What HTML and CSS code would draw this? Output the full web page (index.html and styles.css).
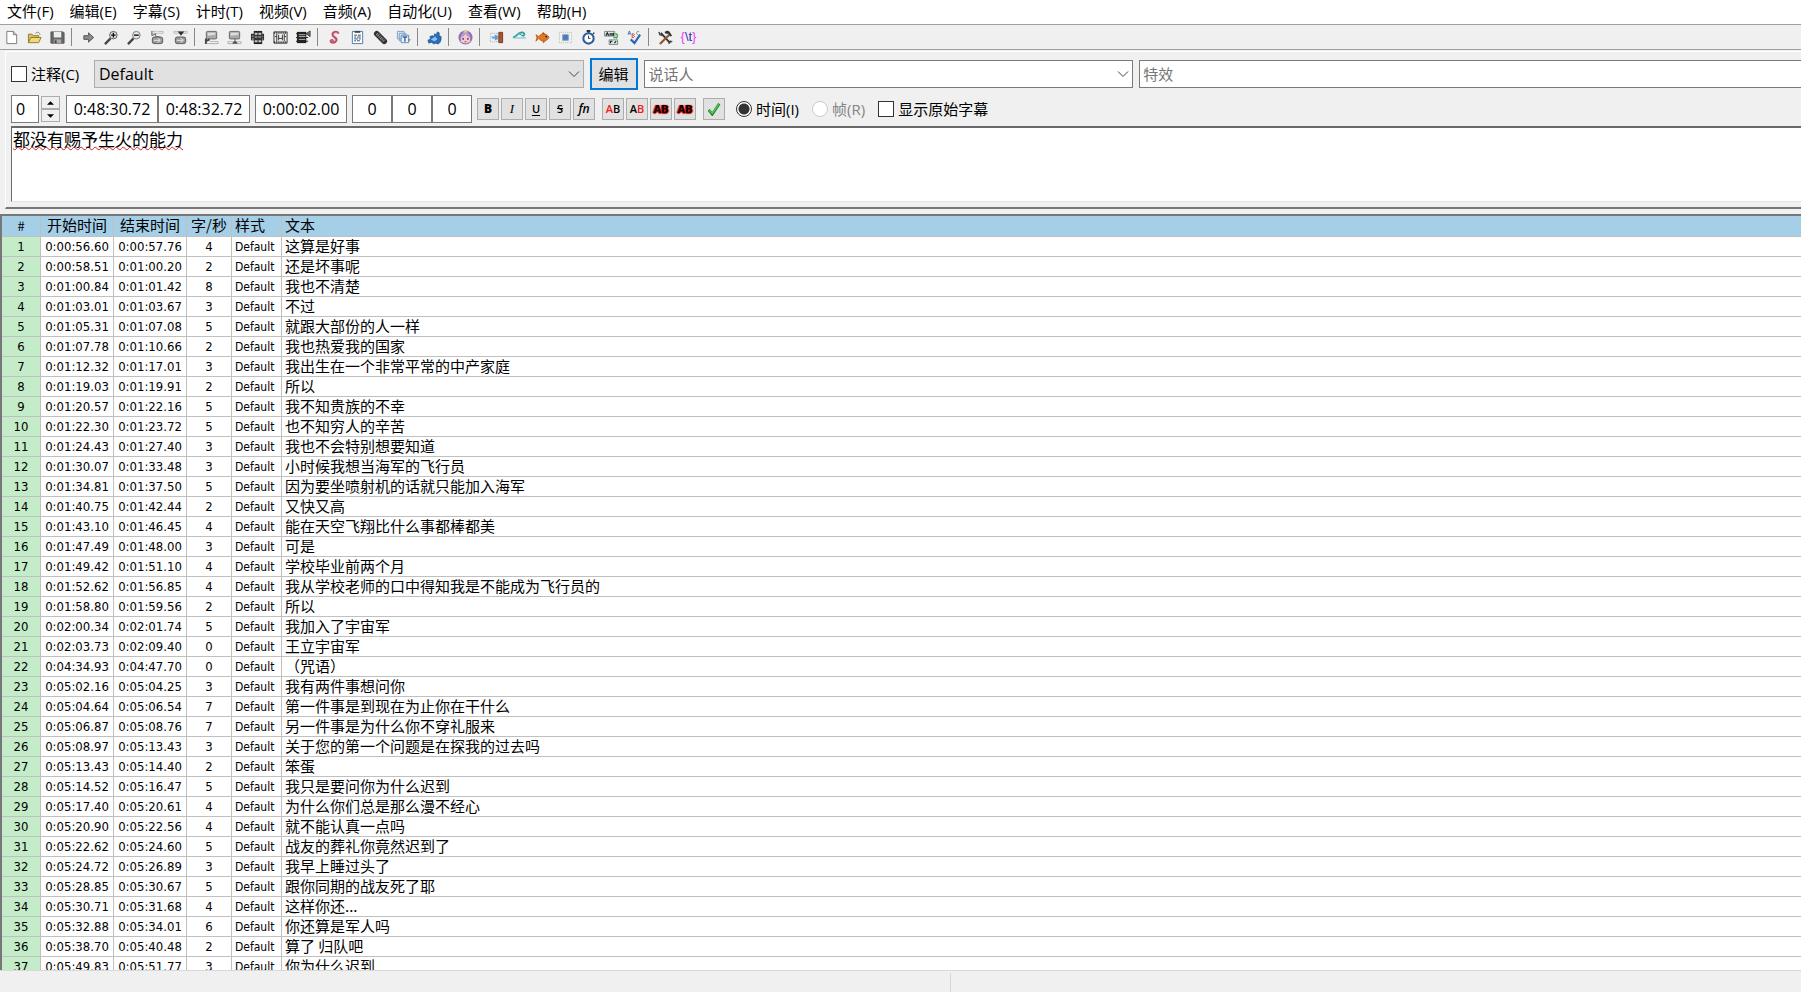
FILE: index.html
```html
<!DOCTYPE html>
<html lang="zh-CN">
<head>
<meta charset="utf-8">
<title>字幕编辑器</title>
<link rel="stylesheet" href="styles.css">
</head>
<body>
<nav class="menu">
<button>文件(F)</button><button>编辑(E)</button><button>字幕(S)</button><button>计时(T)</button><button>视频(V)</button><button>音频(A)</button><button>自动化(U)</button><button>查看(W)</button><button>帮助(H)</button>
</nav>
<div class="toolbar">
<button aria-label="新建"><svg viewBox="0 0 16 16"><path d="M3 1.500h7l3.500 3.500v9.500H3z" fill="#fff" stroke="#777"/><path d="M10 1.500V5h3.500" fill="#ddd" stroke="#777"/></svg></button>
<button aria-label="打开"><svg viewBox="0 0 16 16"><path d="M1.500 13.500v-9h4l1 1.500h6v2" fill="#dcc25a" stroke="#8e7a2e"/><path d="M1.500 13.500L4 8h11l-2.500 5.500z" fill="#f0d976" stroke="#8e7a2e"/><path d="M9 3.500c2-2 4-1 5 1.500" fill="none" stroke="#777"/></svg></button>
<button aria-label="保存"><svg viewBox="0 0 16 16"><path d="M1 2h13l1 1v11H1z" fill="#666" stroke="#555"/><path d="M4 2h8v6H4z" fill="#e9eef0"/><path d="M4 10h8v4H4z" fill="#aaa"/><path d="M5 11h2v3H5z" fill="#444"/></svg></button>
<i class="sep"></i>
<button aria-label="跳转"><svg viewBox="0 0 16 16"><path d="M3 6h5V3l5.500 5L8 13v-3H3z" fill="#8a8a8a" stroke="#555"/></svg></button>
<button aria-label="放大"><svg viewBox="0 0 16 16"><path d="M1 15l6-6" stroke="#444" stroke-width="2.500"/><circle cx="10" cy="5.500" r="4" fill="#e8e8e8" stroke="#555"/><path d="M10 3v5M7.500 5.500h5" stroke="#111" stroke-width="1.500"/></svg></button>
<button aria-label="缩小"><svg viewBox="0 0 16 16"><path d="M1 15l6-6" stroke="#444" stroke-width="2.500"/><circle cx="10" cy="5.500" r="4" fill="#e8e8e8" stroke="#777"/><path d="M7.500 5.500h5" stroke="#111" stroke-width="1.500"/></svg></button>
<button aria-label="起始帧"><svg viewBox="0 0 16 16"><path d="M2 1.500h5M2 3.500h12v-2H8" fill="none" stroke="#bbb"/><path d="M2 1v5l4-2" fill="none" stroke="#555"/><rect x="2.500" y="7.500" width="11" height="7" rx="2" fill="#999" stroke="#555"/><path d="M4 11h6M8 8.500l3 2.500-3 2.500" fill="none" stroke="#eee"/><path d="M6 4v3h4" fill="none" stroke="#666"/></svg></button>
<button aria-label="结束帧"><svg viewBox="0 0 16 16"><path d="M1 1.500h14v2H1z" fill="#eee" stroke="#bbb"/><path d="M5 1.500h7L8.500 6z" fill="#333"/><rect x="2.500" y="7.500" width="11" height="7" rx="2" fill="#999" stroke="#555"/><path d="M4 11h6M8 8.500l3 2.500-3 2.500" fill="none" stroke="#eee"/></svg></button>
<i class="sep"></i>
<button aria-label="起始到视频"><svg viewBox="0 0 16 16"><rect x="2.500" y="1.500" width="11" height="8" rx="1" fill="#aaa" stroke="#666"/><path d="M4 3h8v2L4 6z" fill="#ddd"/><path d="M2 9v6M2 12l4-2" stroke="#444" stroke-width="2"/><path d="M6 12.500h9v2H3" fill="#fff" stroke="#aaa"/></svg></button>
<button aria-label="结束到视频"><svg viewBox="0 0 16 16"><rect x="2.500" y="1.500" width="11" height="8" rx="1" fill="#aaa" stroke="#666"/><path d="M4 3h8v2L4 6z" fill="#ddd"/><path d="M1 12.500h14v2H1z" fill="#fff" stroke="#aaa"/><path d="M8.500 9v3M6 14l2.500-2 2.500 2z" stroke="#555" fill="#444"/></svg></button>
<button aria-label="场景"><svg viewBox="0 0 16 16"><path d="M4 1h9v14H4z" fill="#222"/><path d="M1 4h14v7H1z" fill="#333"/><path d="M5 3h3v2H5zM9 3h3v2H9zM5 7h3v1H5zM9 7h3v1H9zM5 11h3v2H5zM9 11h3v2H9zM2 6h2v1H2zM13 6h1v1h-1zM2 9h2v1H2zM13 9h1v1h-1z" fill="#ccc"/></svg></button>
<button aria-label="画面"><svg viewBox="0 0 16 16"><path d="M1 2h14v12H1z" fill="#eee" stroke="#333"/><path d="M1 3h14M1 13h14" stroke="#333" stroke-width="2" stroke-dasharray="1 1"/><path d="M4 4v8M12 4v8M6 5v6M10 5v6M6 9h4M2 7h2M12 7h2" stroke="#333"/></svg></button>
<button aria-label="平移"><svg viewBox="0 0 16 16"><path d="M1 2h10v12H1z" fill="#222"/><path d="M0 4h13M0 8h13M0 12h13" stroke="#222"/><path d="M3 5h7M3 10h7M3 7h7" stroke="#bbb"/><path d="M11 4l4-3v6z" fill="#777" stroke="#333"/></svg></button>
<i class="sep"></i>
<button aria-label="样式管理"><svg viewBox="0 0 16 16"><path d="M12 4c0-3-6-2.500-6 1 0 3 5 2.500 4 6-1 3-6 3-6 1 0-2 3-1 2 0" fill="none" stroke="#c4506e" stroke-width="2.400"/><path d="M11 3.500c-2-1-4 0-3.500 2" fill="none" stroke="#f3b5c4"/></svg></button>
<button aria-label="属性"><svg viewBox="0 0 16 16"><path d="M2.500 1.500h11v13h-11z" fill="#fff" stroke="#4a77ae"/><path d="M5 1h6v2H5z" fill="#345"/><path d="M4.500 5.500h3m1 0h3m-7 2h2m1 0h4m-7 2h4m1 0h2m-7 2h2m1 0h3" stroke="#246"/></svg></button>
<button aria-label="附件"><svg viewBox="0 0 16 16"><path d="M4 4l8 8" stroke="#333" stroke-width="6" stroke-linecap="round"/><path d="M4 4l8 8" stroke="#999" stroke-width="3" stroke-dasharray="1 1"/></svg></button>
<button aria-label="字体"><svg viewBox="0 0 16 16"><path d="M1.500 1.500h7v8h-7zM3.500 3.500h7v8h-7z" fill="#dce9f6" stroke="#7ba0c8"/><path d="M5.500 5.500h8v8h-8z" fill="#eef5fc" stroke="#6088b8"/><path d="M7 7.500h5M9.500 7.500v5" stroke="#3468a5" stroke-width="1.500"/><path d="M13 9l3 1.500-3 2z" fill="#888"/></svg></button>
<i class="sep"></i>
<button aria-label="自动化"><svg viewBox="0 0 16 16"><path d="M8 4l2 1 1-3 2 1v3l2 1v3l-1 3-2 2-3-1-2 1-2-2-3 1-1-3 3-2-1-2 3-1 2 1z" fill="#2c6db8" stroke="#174b8a" stroke-width=".7"/><path d="M4 10l5-3 2 3-3 2z" fill="#8fc2ef"/></svg></button>
<i class="sep"></i>
<button aria-label="助手"><svg viewBox="0 0 16 16"><circle cx="8" cy="8" r="7.500" fill="#8d70b5"/><path d="M3 8c1-3 3-4 5-4s4 2 5 4v4c-2 3-8 3-10 0z" fill="#f5c9c8"/><path d="M3 8c2 0 4-2 5-4 1 2 3 4 5 4 0-8-10-8-10 0z" fill="#b79ad7"/><path d="M5 2l3-1.500L11 2l-3 1z" fill="#eccb79"/><path d="M5.500 8.500v2M10.500 8.500v2" stroke="#503070" stroke-width="1.500"/><path d="M7 12.500h2" stroke="#c33"/></svg></button>
<i class="sep"></i>
<button aria-label="平移时间"><svg viewBox="0 0 16 16"><path d="M1.500 3.500h8v9h-8z" fill="none" stroke="#aaa" stroke-dasharray="1 1"/><path d="M3 8h6M6.500 5.500L9 8l-2.500 2.500" fill="none" stroke="#5a9ee8" stroke-width="2"/><path d="M10.500 2.500h4v11h-4z" fill="#a5582c" stroke="#713a1c"/></svg></button>
<button aria-label="时间后处理"><svg viewBox="0 0 16 16"><path d="M1 7.500c4 1 5-6 10-5 4 1 2 5-1 3" fill="none" stroke="#25a2a6" stroke-width="1.800"/><path d="M1 8.500h14" stroke="#6bb8c9"/><path d="M8 5l2-1" stroke="#155"/></svg></button>
<button aria-label="卡拉OK"><svg viewBox="0 0 16 16"><path d="M1 5l3 2c3-4 8-4 11 1-3 5-8 5-11 1l-3 3 1-4z" fill="#e27920" stroke="#a84d10" stroke-width=".7"/><path d="M7 4l2-2 2 3M8 12l1 2 2-2" fill="#b65316"/><circle cx="12" cy="7" r="1" fill="#222"/></svg></button>
<button aria-label="分辨率"><svg viewBox="0 0 16 16"><path d="M1.500 2.500h13v11h-13z" fill="none" stroke="#b5b9a8" stroke-dasharray="1 1"/><path d="M5 5h6v6H5z" fill="#4e78b7" stroke="#7da0d4"/></svg></button>
<button aria-label="计时"><svg viewBox="0 0 16 16"><path d="M6 1h4M8 1v3M13 3l1 1" stroke="#234" stroke-width="2"/><circle cx="8" cy="9" r="5.500" fill="#fff" stroke="#2c5d9d" stroke-width="2.200"/><path d="M8 6v3h2" fill="none" stroke="#234"/></svg></button>
<button aria-label="替换"><svg viewBox="0 0 16 16"><path d="M.5 1.500h11v5H.5zM5.500 10.500h9v5h-9z" fill="#dceadd" stroke="#789"/><path d="M2 6l1.500-3L5 6M6.500 6V4h2v2M10 3v3M7 14v-2h2M11 14l2-2" fill="none" stroke="#222" stroke-width="1.200"/><path d="M12 4c3 0 3 3 1 5M10 8h4" fill="none" stroke="#3bab48" stroke-width="1.500"/></svg></button>
<button aria-label="拼写检查"><svg viewBox="0 0 16 16"><path d="M1 5l1.500-4L4 5M1.500 4h2" fill="none" stroke="#357ac5"/><path d="M5.500 8V4h1.500q1.500 1 0 2 2 1 0 2z" fill="none" stroke="#d43b3b"/><path d="M13 2c-3-2-4 3-1 3" fill="none" stroke="#46a659"/><path d="M4 10l4 4 6-9" fill="none" stroke="#2d65b2" stroke-width="2.300"/></svg></button>
<i class="sep"></i>
<button aria-label="选项"><svg viewBox="0 0 16 16"><path d="M3 3l10 11" stroke="#333" stroke-width="2"/><path d="M12 5L2 15" stroke="#8b5730" stroke-width="2.300"/><path d="M7 2c3-2 5-1 6 1l2 3-2 1-2-3H8z" fill="#333"/><path d="M1 2l1 3 3 1M12 15c-1-3 2-4 3-2" fill="none" stroke="#444" stroke-width="1.500"/></svg></button>
<button class="tag" aria-label="标签"><span>{</span><b>\t</b><span>}</span></button>
</div>
<main class="panel">
<div class="row first">
<label class="check note"><input type="checkbox">注释(C)</label>
<div class="combo"><select aria-label="样式"><option>Default</option></select><svg class="chev" viewBox="0 0 12 12"><path d="M1 3.500l5 5 5-5" fill="none" stroke="#444"/></svg></div>
<button class="edit">编辑</button>
<div class="combo"><input type="text" placeholder="说话人" aria-label="说话人"><svg class="chev" viewBox="0 0 12 12"><path d="M1 3.500l5 5 5-5" fill="none" stroke="#444"/></svg></div>
<input class="effect" type="text" placeholder="特效" aria-label="特效">
</div>
<div class="row second">
<div class="spin"><input class="layer" type="text" value="0" aria-label="层"><div class="arrows"><button aria-label="增加"><svg viewBox="0 0 8 4"><path d="M0 4l4-4 4 4z"/></svg></button><button aria-label="减少"><svg viewBox="0 0 8 4"><path d="M0 0l4 4 4-4z"/></svg></button></div></div>
<div class="join"><input class="time" type="text" value="0:48:30.72" aria-label="开始时间"><input class="time" type="text" value="0:48:32.72" aria-label="结束时间"></div>
<input class="time" type="text" value="0:00:02.00" aria-label="持续时间">
<div class="join"><input class="margin" type="text" value="0" aria-label="左边距"><input class="margin" type="text" value="0" aria-label="右边距"><input class="margin" type="text" value="0" aria-label="垂直边距"></div>
<div class="tools"><button class="bold">B</button><button class="ital">I</button><button class="under">U</button><button class="strike">S</button><button class="fn">fn</button></div>
<div class="tools"><button class="c1"><em>A</em>B</button><button class="c2">A<em>B</em></button><button class="c3">AB</button><button class="c4">AB</button></div>
<div class="tools"><button aria-label="提交"><svg viewBox="0 0 16 16"><path d="M2 9l4 5 8-12" fill="none" stroke="#187a22" stroke-width="3"/><path d="M2.500 9.500L6 13l7.500-10.500" fill="none" stroke="#4ed257" stroke-width="1.500"/></svg></button></div>
<label class="check radio"><input type="radio" name="unit" checked>时间(I)</label>
<label class="check radio off"><input type="radio" name="unit" disabled>帧(R)</label>
<label class="check"><input type="checkbox">显示原始字幕</label>
</div>
<textarea aria-label="字幕文本" spellcheck="false">都没有赐予生火的能力</textarea>
</main>
<section class="grid">
<table>
<colgroup><col class="w-n"><col class="w-t"><col class="w-t"><col class="w-c"><col class="w-s"><col></colgroup>
<thead><tr><th class="hash">#</th><th>开始时间</th><th>结束时间</th><th>字/秒</th><th>样式</th><th>文本</th></tr></thead>
<tbody>
<tr><td>1</td><td>0:00:56.60</td><td>0:00:57.76</td><td>4</td><td>Default</td><td>这算是好事</td></tr>
<tr><td>2</td><td>0:00:58.51</td><td>0:01:00.20</td><td>2</td><td>Default</td><td>还是坏事呢</td></tr>
<tr><td>3</td><td>0:01:00.84</td><td>0:01:01.42</td><td>8</td><td>Default</td><td>我也不清楚</td></tr>
<tr><td>4</td><td>0:01:03.01</td><td>0:01:03.67</td><td>3</td><td>Default</td><td>不过</td></tr>
<tr><td>5</td><td>0:01:05.31</td><td>0:01:07.08</td><td>5</td><td>Default</td><td>就跟大部份的人一样</td></tr>
<tr><td>6</td><td>0:01:07.78</td><td>0:01:10.66</td><td>2</td><td>Default</td><td>我也热爱我的国家</td></tr>
<tr><td>7</td><td>0:01:12.32</td><td>0:01:17.01</td><td>3</td><td>Default</td><td>我出生在一个非常平常的中产家庭</td></tr>
<tr><td>8</td><td>0:01:19.03</td><td>0:01:19.91</td><td>2</td><td>Default</td><td>所以</td></tr>
<tr><td>9</td><td>0:01:20.57</td><td>0:01:22.16</td><td>5</td><td>Default</td><td>我不知贵族的不幸</td></tr>
<tr><td>10</td><td>0:01:22.30</td><td>0:01:23.72</td><td>5</td><td>Default</td><td>也不知穷人的辛苦</td></tr>
<tr><td>11</td><td>0:01:24.43</td><td>0:01:27.40</td><td>3</td><td>Default</td><td>我也不会特别想要知道</td></tr>
<tr><td>12</td><td>0:01:30.07</td><td>0:01:33.48</td><td>3</td><td>Default</td><td>小时候我想当海军的飞行员</td></tr>
<tr><td>13</td><td>0:01:34.81</td><td>0:01:37.50</td><td>5</td><td>Default</td><td>因为要坐喷射机的话就只能加入海军</td></tr>
<tr><td>14</td><td>0:01:40.75</td><td>0:01:42.44</td><td>2</td><td>Default</td><td>又快又高</td></tr>
<tr><td>15</td><td>0:01:43.10</td><td>0:01:46.45</td><td>4</td><td>Default</td><td>能在天空飞翔比什么事都棒都美</td></tr>
<tr><td>16</td><td>0:01:47.49</td><td>0:01:48.00</td><td>3</td><td>Default</td><td>可是</td></tr>
<tr><td>17</td><td>0:01:49.42</td><td>0:01:51.10</td><td>4</td><td>Default</td><td>学校毕业前两个月</td></tr>
<tr><td>18</td><td>0:01:52.62</td><td>0:01:56.85</td><td>4</td><td>Default</td><td>我从学校老师的口中得知我是不能成为飞行员的</td></tr>
<tr><td>19</td><td>0:01:58.80</td><td>0:01:59.56</td><td>2</td><td>Default</td><td>所以</td></tr>
<tr><td>20</td><td>0:02:00.34</td><td>0:02:01.74</td><td>5</td><td>Default</td><td>我加入了宇宙军</td></tr>
<tr><td>21</td><td>0:02:03.73</td><td>0:02:09.40</td><td>0</td><td>Default</td><td>王立宇宙军</td></tr>
<tr><td>22</td><td>0:04:34.93</td><td>0:04:47.70</td><td>0</td><td>Default</td><td>（咒语）</td></tr>
<tr><td>23</td><td>0:05:02.16</td><td>0:05:04.25</td><td>3</td><td>Default</td><td>我有两件事想问你</td></tr>
<tr><td>24</td><td>0:05:04.64</td><td>0:05:06.54</td><td>7</td><td>Default</td><td>第一件事是到现在为止你在干什么</td></tr>
<tr><td>25</td><td>0:05:06.87</td><td>0:05:08.76</td><td>7</td><td>Default</td><td>另一件事是为什么你不穿礼服来</td></tr>
<tr><td>26</td><td>0:05:08.97</td><td>0:05:13.43</td><td>3</td><td>Default</td><td>关于您的第一个问题是在探我的过去吗</td></tr>
<tr><td>27</td><td>0:05:13.43</td><td>0:05:14.40</td><td>2</td><td>Default</td><td>笨蛋</td></tr>
<tr><td>28</td><td>0:05:14.52</td><td>0:05:16.47</td><td>5</td><td>Default</td><td>我只是要问你为什么迟到</td></tr>
<tr><td>29</td><td>0:05:17.40</td><td>0:05:20.61</td><td>4</td><td>Default</td><td>为什么你们总是那么漫不经心</td></tr>
<tr><td>30</td><td>0:05:20.90</td><td>0:05:22.56</td><td>4</td><td>Default</td><td>就不能认真一点吗</td></tr>
<tr><td>31</td><td>0:05:22.62</td><td>0:05:24.60</td><td>5</td><td>Default</td><td>战友的葬礼你竟然迟到了</td></tr>
<tr><td>32</td><td>0:05:24.72</td><td>0:05:26.89</td><td>3</td><td>Default</td><td>我早上睡过头了</td></tr>
<tr><td>33</td><td>0:05:28.85</td><td>0:05:30.67</td><td>5</td><td>Default</td><td>跟你同期的战友死了耶</td></tr>
<tr><td>34</td><td>0:05:30.71</td><td>0:05:31.68</td><td>4</td><td>Default</td><td>这样你还...</td></tr>
<tr><td>35</td><td>0:05:32.88</td><td>0:05:34.01</td><td>6</td><td>Default</td><td>你还算是军人吗</td></tr>
<tr><td>36</td><td>0:05:38.70</td><td>0:05:40.48</td><td>2</td><td>Default</td><td>算了 归队吧</td></tr>
<tr><td>37</td><td>0:05:49.83</td><td>0:05:51.77</td><td>3</td><td>Default</td><td>你为什么迟到</td></tr>
</tbody>
</table>
</section>
<footer class="status"><div></div><div></div></footer>
</body>
</html>
```
FILE: styles.css
```css
* { box-sizing: border-box; }
body {
  margin: 0;
  height: 100vh;
  display: flex;
  flex-direction: column;
  overflow: hidden;
  background: #f0f0f0;
  color: #000;
  font: 15px/20px "Open Sans", "Noto Sans CJK SC", sans-serif;
}
button, input, select, textarea { font: inherit; color: inherit; margin: 0; padding: 0; border-radius: 0; }
button { border: 0; background: none; }
svg { display: block; }

.menu { display: flex; gap: 16px; height: 24px; padding: 0 7px 2px; background: #fff; align-items: center; }
.toolbar {
  display: flex;
  align-items: center;
  height: 26px;
  border-top: 1px solid #a0a0a0;
  border-bottom: 1px solid #a0a0a0;
}
.toolbar button { width: 23px; height: 24px; display: flex; align-items: center; justify-content: center; }
.toolbar svg { width: 15px; height: 15px; }
.sep { width: 8px; height: 18px; display: flex; }
.sep::before { content: ""; margin-left: 2px; width: 1px; background: #888; }
.toolbar .tag { font: 13px/16px "Liberation Sans", sans-serif; color: #f03cf0; }
.tag b { color: #3030b0; font-weight: normal; }

.panel {
  margin: 1px 0 0 5px;
  padding: 6px 0 5px 5px;
  border-top: 1px solid #fff;
  border-left: 1px solid #fff;
  border-bottom: 2px solid #777;
}
.row { display: flex; align-items: center; }
.first { gap: 6px; height: 32px; margin-bottom: 5px; }
.panel input[type="text"], .panel select {
  height: 28px;
  border: 1px solid #7a7a7a;
  background: #fff;
  outline: 0;
}
.check { display: flex; align-items: center; gap: 4px; white-space: nowrap; }
.check input { appearance: none; width: 16px; height: 16px; border: 1px solid #333; background: #fff; }
.note { width: 77px; }
.combo { flex: 489 1 0; position: relative; display: flex; }
.panel .combo select { appearance: none; width: 100%; padding-left: 4px; background: #e1e1e1; border-color: #adadad; font-size: 16px; }
.combo input { width: 100%; padding-left: 4px; }
.chev { position: absolute; right: 4px; top: 8px; width: 12px; height: 12px; pointer-events: none; }
.edit { width: 48px; height: 32px; border: 2px solid #0078d7; background: #e1e1e1; }
.panel .first .effect { flex: 657 1 0; min-width: 0; padding-left: 3px; border-right: 0; }
.panel ::placeholder { color: #757575; opacity: 1; }

.second { gap: 5px; height: 28px; margin-bottom: 3px; }
.second input[type="text"] { font-size: 16px; text-align: center; }
.spin { display: flex; align-items: center; gap: 2px; margin-right: 1px; }
.spin input.layer[type="text"] { width: 28px; text-align: left; padding-left: 4px; }
.arrows { display: flex; flex-direction: column; }
.arrows button { width: 19px; height: 13px; border: 1px solid #adadad; background: #f0f0f0; display: flex; align-items: center; justify-content: center; }
.arrows svg { width: 7px; height: 4px; }
.join { display: flex; }
.time { width: 92px; }
.margin { width: 40px; }
.tools { display: flex; gap: 2px; }
.tools + .tools { margin-left: 2px; }
.tools button {
  width: 22px;
  height: 22px;
  border: 1px solid #adadad;
  background: #e1e1e1;
  display: flex;
  align-items: center;
  justify-content: center;
  font: bold 11px/16px "Open Sans", sans-serif;
}
.tools svg { width: 14px; height: 14px; }
.tools em { font-style: normal; color: #f01818; }
.tools .bold { font-weight: 800; font-size: 12px; }
.tools .ital { font: italic 13px/16px "Liberation Serif", serif; }
.tools .under { font-weight: 600; text-decoration: underline; text-underline-offset: 2px; }
.tools .strike { font-weight: 600; text-decoration: line-through; }
.tools .fn { font-style: italic; font-size: 12px; font-weight: 600; }
.tools .c1, .tools .c2 { font-weight: 600; }
.tools .c3, .tools .c4 { text-shadow: 1px 0 1px #d00000, -1px 0 1px #d00000, 0 1px 1px #d00000; }
.radio { margin-left: 6px; }
.radio input { border-radius: 50%; }
.radio input:checked { background: radial-gradient(circle, #333 0 5px, #fff 6px); }
.radio + .radio { margin-left: 8px; }
.off { color: #838383; }
.radio input:disabled { border-color: #ccc; }
.off + .check { margin-left: 8px; }

textarea {
  display: block;
  width: 100%;
  height: 76px;
  padding: 1px 1px;
  border: solid #696969;
  border-width: 2px 0 1px 1px;
  border-bottom-color: #e3e3e3;
  background: #fff;
  resize: none;
  outline: 0;
  font-size: 17px;
  line-height: 22px;
  text-decoration: underline wavy #d02020 1px;
  text-underline-offset: 0;
}

.grid {
  flex: 1 1 0;
  min-height: 0;
  overflow: hidden;
  margin-top: 5px;
  border-top: 2px solid #777;
  border-left: 2px solid #777;
  background: #fff;
}
table { width: 100%; table-layout: fixed; border-collapse: separate; border-spacing: 0; }
.w-n { width: 39px; }
.w-t { width: 73px; }
.w-c { width: 45px; }
.w-s { width: 50px; }
th, td {
  height: 20px;
  padding: 0;
  border: solid #c0c0c0;
  border-width: 0 1px 1px 0;
  font: 13px/19px "DejaVu Sans Condensed", "Noto Sans", sans-serif;
  text-align: center;
  white-space: nowrap;
  overflow: hidden;
}
th { height: 21px; padding-bottom: 2px; background: #a5cee7; line-height: 18px; font-family: "Noto Sans CJK SC", sans-serif; font-size: 15px; }
.hash { padding: 0; font-size: 13px; }
td:first-child { background: #c4ecc9; }
th:nth-child(n+5), td:nth-child(n+5) { text-align: left; padding-left: 3px; }
td:nth-child(5) { padding-top: 1px; font-size: 12px; line-height: 18px; }
td:last-child { padding-bottom: 2px; font: 15px/17px "Noto Sans CJK SC", sans-serif; }
th:last-child, td:last-child { border-right: 0; }

.status { display: flex; height: 22px; border-top: 1px solid #d8d8d8; padding-top: 2px; }
.status div { flex: 950 1 0; border-right: 1px solid #d7d7d7; }
.status div + div { flex-grow: 850; border: 0; }
```
